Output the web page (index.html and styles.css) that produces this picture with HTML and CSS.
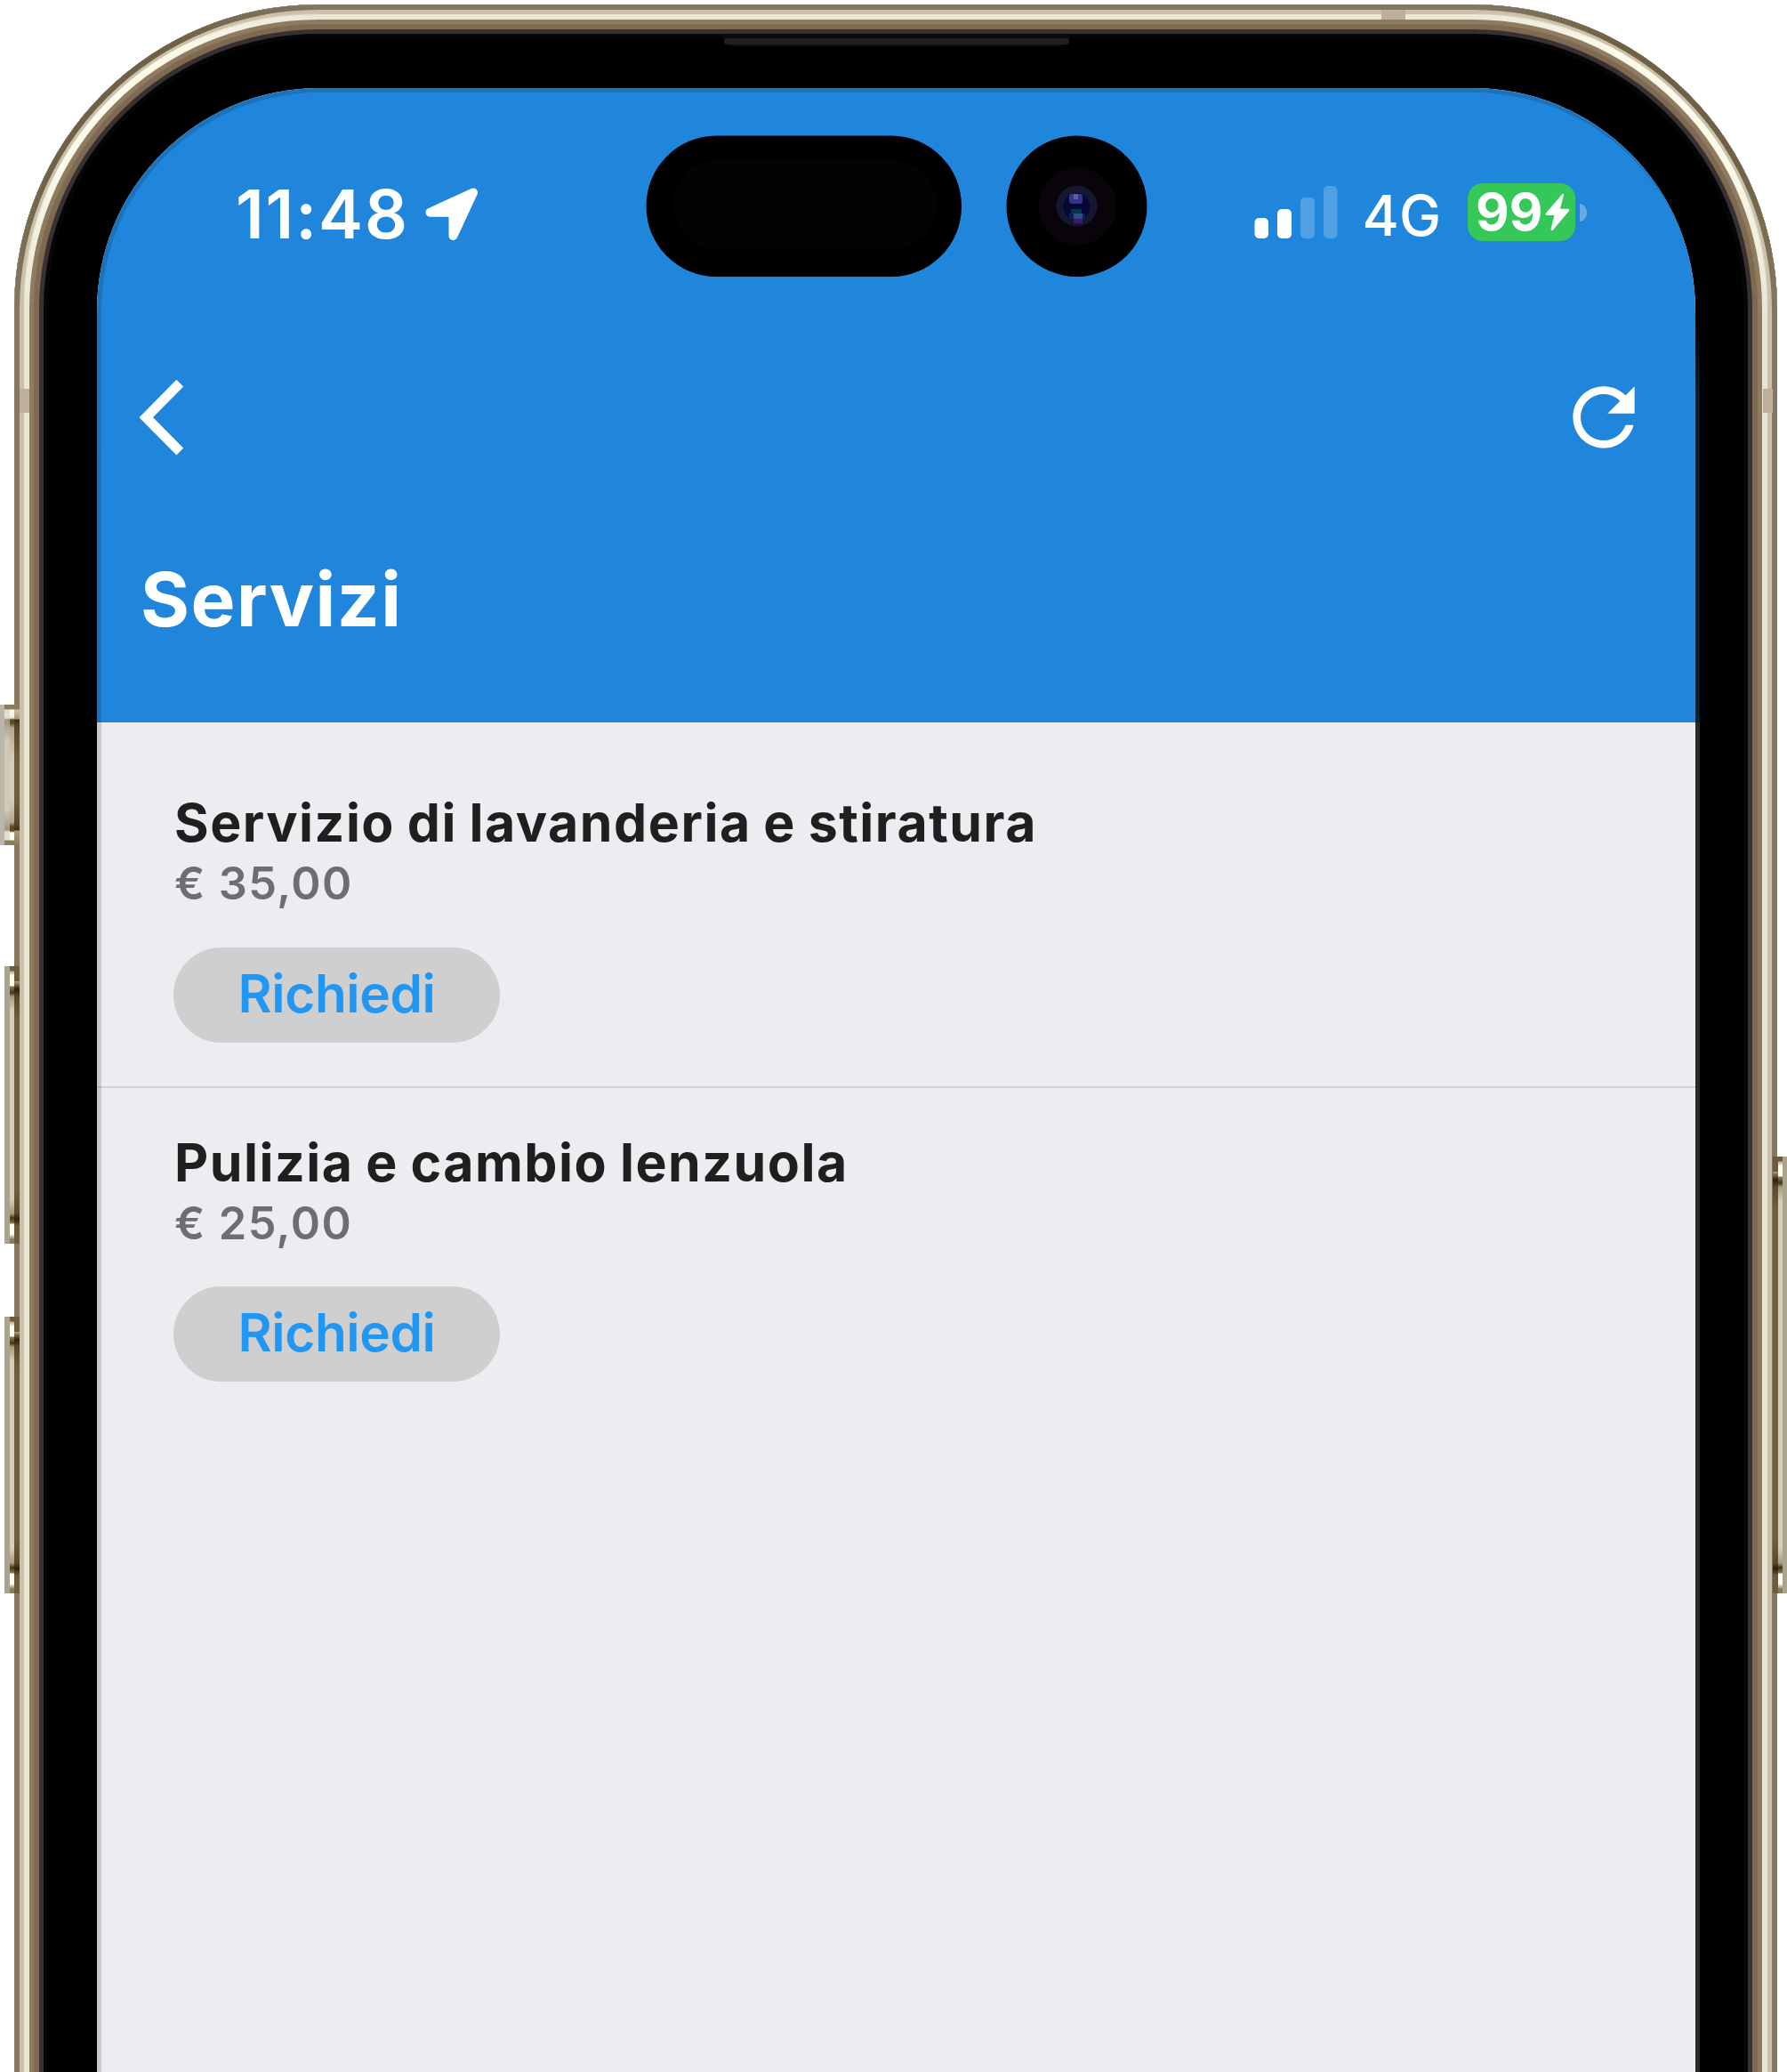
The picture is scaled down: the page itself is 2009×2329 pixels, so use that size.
FILE: index.html
```html
<!DOCTYPE html>
<html lang="it">
<head>
<meta charset="utf-8">
<title>Servizi</title>
<link rel="stylesheet" href="styles.css">
</head>
<body>
<div class="stage">
  <span class="side-button mute"></span>
  <span class="side-button volume-up"></span>
  <span class="side-button volume-down"></span>
  <span class="side-button power"></span>

  <div class="phone">
    <main class="screen">
      <header class="header">
        <div class="status-bar">
          <div class="status-left">
            <span class="time">11:48</span>
            <svg class="location" width="60" height="65" viewBox="0 0 60 65"><path d="M5.5 32.7 54 10.5 31.5 59V32.7z" fill="#fff" stroke="#fff" stroke-width="10" stroke-linejoin="round"/></svg>
          </div>
          <div class="status-right">
            <svg class="signal" width="94" height="65" viewBox="0 0 94 65" fill="#fff">
              <rect x=".5" y="39" width="15.5" height="23" rx="5"/>
              <rect x="26" y="29" width="16" height="33" rx="5"/>
              <rect x="52" y="16" width="16" height="46" rx="5" opacity=".22"/>
              <rect x="78" y="3" width="15.5" height="59" rx="5" opacity=".22"/>
            </svg>
            <span class="network">4G</span>
            <div class="battery">
              <span class="level">99</span>
              <svg width="28" height="43" viewBox="0 0 28 43"><path d="M19.5 1 1 22.500Q0 24.500 2 25H10.500L6.500 40.500Q7 43 9 41.500L27 20Q28 18 26 17.700H17L21 2Q20.500 0 19.500 1z" fill="#fff"/></svg>
            </div>
            <span class="battery-tip"></span>
          </div>
        </div>
        <nav class="nav">
          <svg width="50" height="86" viewBox="0 0 50 86"><path d="M45.300 4.700 7.300 43.200 45.300 81.700" fill="none" stroke="#fff" stroke-width="11"/></svg>
          <svg width="104" height="104" viewBox="0 0 24 24"><path fill="#fff" d="M17.650 6.350C16.200 4.900 14.210 4 12 4c-4.420 0-7.990 3.580-7.990 8s3.570 8 7.990 8c3.730 0 6.840-2.550 7.730-6h-2.080c-.82 2.330-3.040 4-5.650 4-3.310 0-6-2.690-6-6s2.690-6 6-6c1.660 0 3.140.69 4.220 1.780L13 11h7V4l-2.350 2.350z"/></svg>
        </nav>
        <h1 class="title">Servizi</h1>
      </header>
      <ul class="services">
        <li class="service">
          <h2 class="name">Servizio di lavanderia e stiratura</h2>
          <p class="price">€ 35,00</p>
          <button class="request">Richiedi</button>
        </li>
        <li class="service">
          <h2 class="name">Pulizia e cambio lenzuola</h2>
          <p class="price">€ 25,00</p>
          <button class="request">Richiedi</button>
        </li>
      </ul>
    </main>
  </div>

  <svg class="hardware" width="2009" height="2329" viewBox="0 0 2009 2329">
    <defs>
      <linearGradient id="shineLeft" gradientUnits="userSpaceOnUse" x1="16" y1="347" x2="358" y2="5">
        <stop offset="0" stop-color="#fff" stop-opacity="0"/><stop offset=".3" stop-color="#fff"/><stop offset=".7" stop-color="#fff"/><stop offset="1" stop-color="#fff" stop-opacity="0"/>
      </linearGradient>
      <linearGradient id="shineRight" gradientUnits="userSpaceOnUse" x1="1998" y1="347" x2="1656" y2="5">
        <stop offset="0" stop-color="#fff" stop-opacity="0"/><stop offset=".3" stop-color="#fff"/><stop offset=".7" stop-color="#fff"/><stop offset="1" stop-color="#fff" stop-opacity="0"/>
      </linearGradient>
      <linearGradient id="edge" x1="0" y1="0" x2="0" y2="1">
        <stop offset="0" stop-color="#000"/><stop offset=".2" stop-color="#062033"/><stop offset="1" stop-color="#062033"/>
      </linearGradient>
      <mask id="fadeLeft"><rect width="400" height="400" fill="url(#shineLeft)"/></mask>
      <mask id="fadeRight"><rect x="1609" width="400" height="400" fill="url(#shineRight)"/></mask>
    </defs>
    <g fill="none" mask="url(#fadeLeft)">
      <path d="M19 347A339 339 0 0 1 358 8" stroke="#6f6047" stroke-width="6"/>
      <path d="M29 347A329 329 0 0 1 358 18" stroke="#fbf9ea" stroke-width="7"/>
    </g>
    <g fill="none" mask="url(#fadeRight)">
      <path d="M1995 347A339 339 0 0 0 1656 8" stroke="#6f6047" stroke-width="6"/>
      <path d="M1985 347A329 329 0 0 0 1656 18" stroke="#fbf9ea" stroke-width="7"/>
    </g>
    <rect x="1906" y="350" width="5" height="462" fill="url(#edge)"/>
    <rect x="1906" y="812" width="5" height="1517" fill="#282a29"/>
    <rect x="1553" y="11" width="27" height="11" fill="#bfae9a"/>
    <rect x="22" y="437" width="11" height="27" fill="#bfae9c"/>
    <rect x="1982" y="437" width="11" height="27" fill="#bfae9c"/>
    <path d="M811 38H1204Q1201 52 1189 52H826Q814 52 811 38z" fill="#0c0c0c"/>
    <rect x="814" y="43" width="388" height="7" rx="3" fill="#202020"/>
    <rect x="726.500" y="152.500" width="354.500" height="158.500" rx="79"/>
    <rect x="757" y="180" width="296" height="100" rx="50" fill="#030303"/>
    <ellipse cx="1210.500" cy="231.700" rx="79" ry="79.200"/>
    <circle cx="1211" cy="232" r="44" fill="#080409"/>
    <circle cx="1210.500" cy="231.500" r="23" fill="#15162f"/>
    <circle cx="1210.500" cy="232" r="15" fill="#070733"/>
    <rect x="1202" y="218" width="15" height="11" rx="3" fill="#343488"/>
    <rect x="1207" y="218" width="5" height="6" fill="#5c5ca0"/>
    <rect x="1204" y="235" width="12" height="6" fill="#06334d"/>
    <rect x="1202" y="240" width="18" height="6" fill="#0b1c60"/>
    <rect x="1207" y="240" width="10" height="6" fill="#24507e"/>
    <rect x="1207" y="246" width="10" height="5" fill="#3c1a6c"/>
  </svg>
</div>
</body>
</html>
```
FILE: styles.css
```css
* { box-sizing: border-box; margin: 0; padding: 0; }

body {
  background: #fff;
  font-family: Inter, "Liberation Sans", sans-serif;
}

.stage {
  position: relative;
  height: 2329px;
  overflow: hidden;
  padding: 5px 11px 0 16px;
}

/* Metal rim and bezel: concentric bands from the outside in */
.phone {
  height: 2800px;
  padding: 94px 92px 0 93px;
  border-radius: 342px;
  background: #000;
  box-shadow:
    inset 0 0 0 6px #857863,
    inset 0 0 0 11px #cbc1ab,
    inset 0 0 0 17px #e9e6d5,
    inset 0 0 0 22px #8f7b60,
    inset 0 0 0 28px #7d6a50,
    inset 0 0 0 33px #383032,
    inset 0 0 0 38px #050707;
}

.screen {
  height: 2600px;
  border-radius: 250px;
  overflow: hidden;
  background: #edecf1;
  position: relative;
}

.screen::after {
  content: "";
  position: absolute;
  inset: 0;
  border: solid rgba(0, 0, 0, .14);
  border-width: 5px 0 0 5px;
  border-radius: 250px;
}

.header {
  height: 713px;
  padding: 107px 122px 0 156px;
  background: #1f86db;
  color: #fff;
}

.status-bar, .status-left, .status-right {
  display: flex;
  align-items: flex-start;
}

.status-bar { justify-content: space-between; height: 65px; }

.time {
  margin-top: 2px;
  font-size: 75px;
  font-weight: 600;
  line-height: 65px;
  letter-spacing: 1.9px;
}

.location { margin-left: 18px; }

.network {
  margin: 4px 30px 0 28px;
  font-size: 63px;
  font-weight: 500;
  line-height: 65px;
}

.battery {
  display: flex;
  align-items: center;
  gap: 3px;
  width: 121px;
  height: 65px;
  padding-left: 9px;
  border-radius: 17px;
  background: #36c759;
}

.level {
  font-size: 58px;
  font-weight: 700;
  line-height: 65px;
}

.battery-tip {
  width: 8px;
  height: 20px;
  margin: 23px 0 0 5px;
  border-radius: 0 8px 8px 0 / 0 10px 10px 0;
  background: #66abe6;
}

.nav {
  display: flex;
  justify-content: space-between;
  align-items: center;
  height: 104px;
  margin: 146px -71px 0 -108px;
}

.title {
  margin: 103px 0 0 -107px;
  font-size: 84px;
  font-weight: 700;
  line-height: 100px;
  letter-spacing: 1.4px;
}

.services {
  list-style: none;
  padding-top: 29px;
}

.service {
  display: flex;
  flex-direction: column;
  align-items: flex-start;
  padding: 50px 86px 49px;
  border-bottom: 2px solid #d2d2d7;
}

.service:last-child { border-bottom: 0; }

.name {
  padding-left: 1px;
  color: #1f1f1f;
  font-size: 59px;
  font-weight: 700;
  line-height: 68px;
  letter-spacing: 1.5px;
  word-spacing: -1.8px;
}

.price {
  margin-top: 4px;
  padding-left: 1px;
  color: #6e6e71;
  font-size: 50.5px;
  font-weight: 600;
  line-height: 60px;
  letter-spacing: 1.4px;
}

.request {
  width: 367px;
  height: 107px;
  margin-top: 41.5px;
  padding-bottom: 3px;
  border: 0;
  border-radius: 54px;
  background: #cfcfcf;
  color: #2196f3;
  font-family: inherit;
  font-size: 58.5px;
  font-weight: 600;
  line-height: 104px;
  letter-spacing: -.4px;
}

.hardware {
  position: absolute;
  top: 0;
  left: 0;
}

/* Side buttons sit over the rim; caps at both ends catch the light */
.side-button {
  position: absolute;
  z-index: 1;
  left: 5px;
  width: 17px;
  background:
    linear-gradient(#6b5c3d, #6b5c3d 17px, #ab9f80 17px, #57472a 23px, #2e1f08 26px, #5a4a2b 34px, #6e5f3f 60px, #6e5f3f calc(100% - 60px), #5a4a2b calc(100% - 34px), #2e1f08 calc(100% - 28px), #6b5c3d calc(100% - 20px), #6b5c3d) 11px 0 / 6px 100% no-repeat,
    linear-gradient(#6b5c3d 5px, #b9ae90 6px, #fffff2 11px, #fffff2 22px, #8a7d5c 23px, #453515 30px, #a79b7b 34px, #d6ceb9 50px, #d6ceb9 calc(100% - 50px), #a79b7b calc(100% - 34px), #453515 calc(100% - 29px), #8a7d5c calc(100% - 23px), #fffff2 calc(100% - 22px), #fffff2 calc(100% - 11px), #8a7d5c calc(100% - 5px)) 6px 0 / 5px 100% no-repeat,
    #aaa48e;
}

.mute {
  top: 792px;
  left: 0;
  width: 22px;
  height: 158px;
  background:
    linear-gradient(#8a7d5c 5px, #c9c0a6 6px, #a79b7b 16px, #3f2f12 17px, #57472a 24px, #6e5f3f 60px, #6e5f3f calc(100% - 50px), #57472a calc(100% - 24px), #3f2f12 calc(100% - 17px), #a79b7b calc(100% - 16px), #8a7d5c) 16px 0 / 6px 100% no-repeat,
    linear-gradient(#8a7d5c 5px, #fffff2 6px, #f0ecdc 15px, #5a4a2b 17px, #5a4a2b 21px, #b3a88c 26px, #d6ccbd 60px, #d6ccbd calc(100% - 50px), #b3a88c calc(100% - 26px), #5a4a2b calc(100% - 21px), #5a4a2b calc(100% - 16px), #fffff2 calc(100% - 14px), #fffff2 calc(100% - 6px), #8a7d5c calc(100% - 5px)) 11px 0 / 5px 100% no-repeat,
    linear-gradient(#8a7d5c 5px, #e3dfce 6px, #e3dfce 15px, #a0957c 17px, #d0c8b6 40px, #d0c8b6 calc(100% - 40px), #a0957c calc(100% - 17px), #e3dfce calc(100% - 15px), #e3dfce calc(100% - 6px), #8a7d5c calc(100% - 5px)) 5px 0 / 6px 100% no-repeat,
    #bab6a8;
}

.volume-up { top: 1086px; height: 312px; }
.volume-down { top: 1480px; height: 311px; }
.power {
  top: 1300px;
  left: 1993px;
  height: 491px;
  transform: scaleX(-1);
}
```
